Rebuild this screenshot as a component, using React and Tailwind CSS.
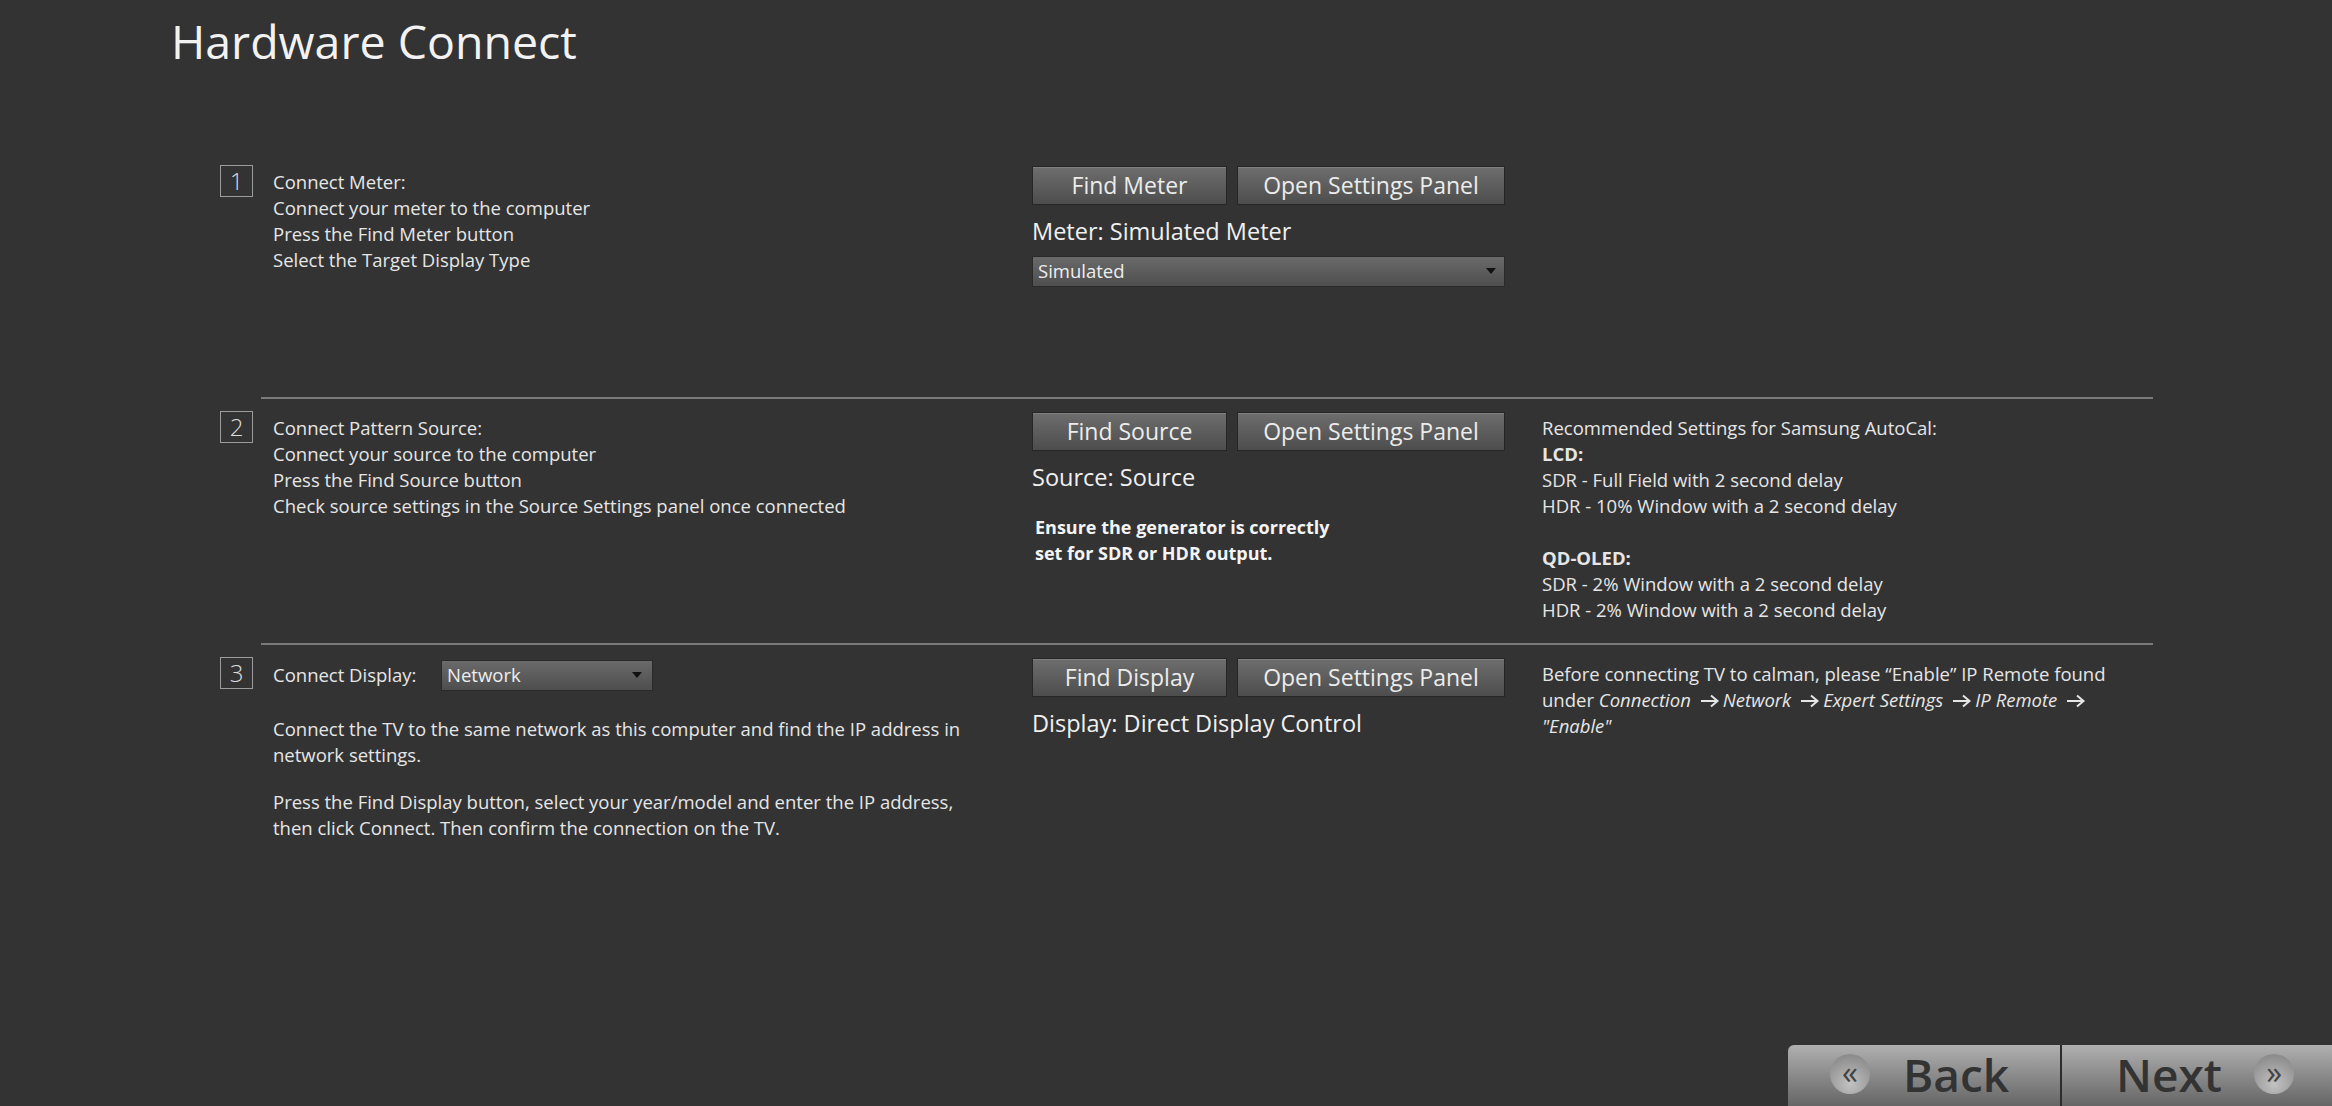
import React from "react";

const FONT = { fontFamily: '"Open Sans", "Noto Sans", sans-serif' };

function StepBox({ n }) {
  return (
    <div className="w-[33px] h-[32px] shrink-0 border border-[#9c9c9c] flex items-center justify-center text-[24px] leading-none text-[#dcdcdc] font-light">
      {n}
    </div>
  );
}

function GreyButton({ children, width }) {
  return (
    <button
      className={`${width} h-[39px] shrink-0 border border-[#262626] bg-gradient-to-b from-[#6e6e6e] to-[#4d4d4d] text-[23px] leading-none text-[#ececec] shadow-[inset_0_1px_0_rgba(255,255,255,0.12)]`}
    >
      {children}
    </button>
  );
}

function Dropdown({ value, width, arrowGap }) {
  return (
    <div
      className={`${width} h-[31px] border border-[#2a2a2a] bg-gradient-to-b from-[#6a6a6a] to-[#4e4e4e] flex items-center justify-between pl-[5px] ${arrowGap}`}
    >
      <span className="text-[18.5px] text-[#eeeeee] leading-none">{value}</span>
      <svg width="10" height="6" viewBox="0 0 10 6">
        <path d="M0 0 L10 0 L5 6 Z" fill="#111111" />
      </svg>
    </div>
  );
}

function ActionColumn({ findLabel, findWidth }) {
  return (
    <div className="flex gap-[10px] pt-[1px]">
      <GreyButton width={findWidth}>{findLabel}</GreyButton>
      <GreyButton width="w-[268px]">Open Settings Panel</GreyButton>
    </div>
  );
}

function Separator() {
  return <div className="ml-[41px] w-[1892px] h-[2px] bg-[#7a7a7a] mb-[12px]" />;
}

function Arrow() {
  return (
    <svg width="20" height="14" viewBox="0 0 20 14" className="inline-block align-[-1px] ml-[9px] mr-[3px]">
      <path d="M1 7 H17 M11 1.5 L17.5 7 L11 12.5" fill="none" stroke="#e6e6e6" strokeWidth="2" />
    </svg>
  );
}

function NavCircle({ glyph }) {
  return (
    <div className="w-[40px] h-[40px] rounded-full bg-[radial-gradient(circle_at_50%_75%,#c2c2c2,#8c8c8c_80%)] flex items-center justify-center text-[32px] leading-none text-[#444444] shrink-0">
      <span className="-mt-[5px]">{glyph}</span>
    </div>
  );
}

export default function App() {
  return (
    <div className="w-full h-[1106px] bg-[#333333] flex flex-col overflow-hidden text-[#e6e6e6]" style={FONT}>
      {/* Title */}
      <h1 className="pl-[171px] pt-[18px] text-[46.5px] leading-none text-[#f2f2f2] font-normal">
        Hardware Connect
      </h1>

      {/* Steps */}
      <div className="pl-[220px] mt-[100px] flex flex-col">
        {/* Step 1 */}
        <div className="h-[232px] flex">
          <StepBox n="1" />
          <div className="ml-[20px] w-[759px] pt-[4px] text-[18.5px] leading-[26px]">
            <div>Connect Meter:</div>
            <div>Connect your meter to the computer</div>
            <div>Press the Find Meter button</div>
            <div>Select the Target Display Type</div>
          </div>
          <div className="w-[510px] flex flex-col">
            <ActionColumn findLabel="Find Meter" findWidth="w-[195px]" />
            <div className="mt-[11px] text-[23.5px] leading-[30px] text-[#f0f0f0]">Meter: Simulated Meter</div>
            <div className="mt-[10px]">
              <Dropdown value="Simulated" width="w-[473px]" arrowGap="pr-[8px]" />
            </div>
          </div>
          <div className="w-[611px]" />
        </div>
        <Separator />

        {/* Step 2 */}
        <div className="h-[232px] flex">
          <StepBox n="2" />
          <div className="ml-[20px] w-[759px] pt-[4px] text-[18.5px] leading-[26px]">
            <div>Connect Pattern Source:</div>
            <div>Connect your source to the computer</div>
            <div>Press the Find Source button</div>
            <div>Check source settings in the Source Settings panel once connected</div>
          </div>
          <div className="w-[510px] flex flex-col">
            <ActionColumn findLabel="Find Source" findWidth="w-[195px]" />
            <div className="mt-[11px] text-[23.5px] leading-[30px] text-[#f0f0f0]">Source: Source</div>
            <div className="mt-[22px] pl-[3px] text-[18px] leading-[26px] font-bold text-[#f4f4f4]">
              Ensure the generator is correctly
              <br />
              set for SDR or HDR output.
            </div>
          </div>
          <div className="w-[611px] pt-[4px] text-[18.5px] leading-[26px]">
            <div>Recommended Settings for Samsung AutoCal:</div>
            <div className="font-bold">LCD:</div>
            <div>SDR - Full Field with 2 second delay</div>
            <div>HDR - 10% Window with a 2 second delay</div>
            <div className="h-[26px]" />
            <div className="font-bold">QD-OLED:</div>
            <div>SDR - 2% Window with a 2 second delay</div>
            <div>HDR - 2% Window with a 2 second delay</div>
          </div>
        </div>
        <Separator />

        {/* Step 3 */}
        <div className="h-[232px] flex">
          <StepBox n="3" />
          <div className="ml-[20px] w-[759px] text-[18.5px] leading-[26px]">
            <div className="flex items-start">
              <div className="w-[168px] pt-[5px]">Connect Display:</div>
              <div className="mt-[3px]">
                <Dropdown value="Network" width="w-[212px]" arrowGap="pr-[10px]" />
              </div>
            </div>
            <div className="mt-[25px] whitespace-nowrap">
              Connect the TV to the same network as this computer and find the IP address in
              <br />
              network settings.
            </div>
            <div className="mt-[21px] whitespace-nowrap">
              Press the Find Display button, select your year/model and enter the IP address,
              <br />
              then click Connect. Then confirm the connection on the TV.
            </div>
          </div>
          <div className="w-[510px] flex flex-col">
            <ActionColumn findLabel="Find Display" findWidth="w-[195px]" />
            <div className="mt-[11px] text-[23.5px] leading-[30px] text-[#f0f0f0]">Display: Direct Display Control</div>
          </div>
          <div className="w-[611px] pt-[4px] text-[18.5px] leading-[26px] whitespace-nowrap">
            <div>Before connecting TV to calman, please “Enable” IP Remote found</div>
            <div>
              under <i>Connection</i>
              <Arrow />
              <i>Network</i>
              <Arrow />
              <i>Expert Settings</i>
              <Arrow />
              <i>IP Remote</i>
              <Arrow />
            </div>
            <div>
              <i>"Enable"</i>
            </div>
          </div>
        </div>
      </div>

      {/* Bottom navigation */}
      <div className="mt-auto flex justify-end">
        <div className="w-[272px] h-[61px] rounded-tl-[6px] bg-gradient-to-b from-[#b0b0b0] to-[#666666] flex items-center pb-[3px] pl-[42px]">
          <NavCircle glyph="«" />
          <span className="ml-[33px] text-[46px] leading-[55px] text-[#333333] font-semibold">Back</span>
        </div>
        <div className="w-[2px] h-[61px] bg-[#2c2c2c]" />
        <div className="w-[270px] h-[61px] bg-gradient-to-b from-[#b0b0b0] to-[#666666] flex items-center pb-[3px] pl-[54px]">
          <span className="text-[46px] leading-[55px] text-[#333333] font-semibold">Next</span>
          <span className="ml-[32px]">
            <NavCircle glyph="»" />
          </span>
        </div>
      </div>
    </div>
  );
}
